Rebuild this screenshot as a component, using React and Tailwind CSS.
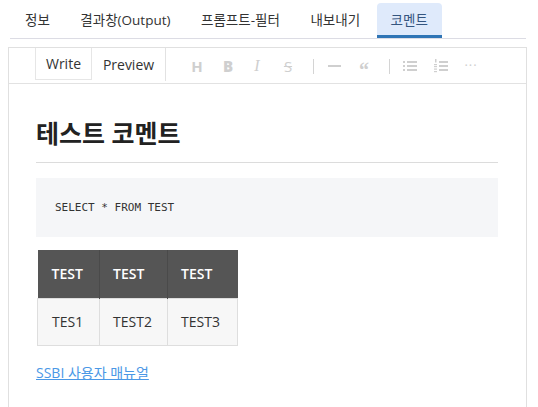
import React from 'react';

const tabs = ['정보', '결과창(Output)', '프롬프트-필터', '내보내기', '코멘트'];

const ToolIcon = ({ children, className = '' }) => (
  <div className={`w-[20px] h-[20px] flex items-center justify-center text-[#cfcfcf] ${className}`}>
    {children}
  </div>
);

const Sep = ({ className = '' }) => <div className={`w-px h-[15px] bg-[#d4d4d4] ${className}`} />;

const Toolbar = () => (
  <div className="flex items-start h-[36px] border-b border-[#e2e2e2] pl-[26px]">
    <div className="h-[32px] w-[57px] flex items-center justify-center bg-white border-x border-b border-[#e6e6e6] text-[14px] text-[#333]">
      Write
    </div>
    <div className="h-[33px] w-[74px] flex items-center justify-center border-r border-[#e2e2e2] text-[14px] text-[#333]">
      Preview
    </div>
    <div className="flex items-center h-[36px]">
      <ToolIcon className="ml-[21px]"><span className="font-bold text-[15px]">H</span></ToolIcon>
      <ToolIcon className="ml-[11px]"><span className="font-black text-[15px]">B</span></ToolIcon>
      <ToolIcon className="ml-[9px]"><span className="italic text-[16px] font-['Liberation_Serif',serif]">I</span></ToolIcon>
      <ToolIcon className="ml-[11px]"><span className="line-through text-[15px]">S</span></ToolIcon>
      <Sep className="ml-[15px]" />
      <ToolIcon className="ml-[10px]">
        <div className="w-[13px] h-[2px] bg-[#cfcfcf]" />
      </ToolIcon>
      <ToolIcon className="ml-[10px]">
        <span className="font-black text-[20px] leading-none mt-[8px] font-['Liberation_Serif',serif]">“</span>
      </ToolIcon>
      <Sep className="ml-[15px]" />
      <ToolIcon className="ml-[10px]">
        <svg width="14" height="12" viewBox="0 0 14 12" fill="#cfcfcf">
          <rect x="0" y="1" width="2" height="2" />
          <rect x="0" y="5" width="2" height="2" />
          <rect x="0" y="9" width="2" height="2" />
          <rect x="4" y="1" width="10" height="2" />
          <rect x="4" y="5" width="10" height="2" />
          <rect x="4" y="9" width="10" height="2" />
        </svg>
      </ToolIcon>
      <ToolIcon className="ml-[11px]">
        <svg width="14" height="14" viewBox="0 0 14 14" fill="#cfcfcf">
          <rect x="1" y="0" width="1.5" height="3.5" />
          <rect x="0" y="5" width="3" height="1.2" />
          <rect x="0" y="7" width="3" height="1.2" />
          <rect x="0" y="9.5" width="3" height="1.2" />
          <rect x="0" y="12" width="3" height="1.2" />
          <rect x="5" y="2" width="9" height="2" />
          <rect x="5" y="6" width="9" height="2" />
          <rect x="5" y="10" width="9" height="2" />
        </svg>
      </ToolIcon>
      <ToolIcon className="ml-[10px]"><span className="text-[13px] tracking-[1px]">···</span></ToolIcon>
    </div>
  </div>
);

export default function App() {
  return (
    <div className="w-[538px] h-[407px] overflow-hidden bg-white font-['Open_Sans','Noto_Sans_CJK_KR',sans-serif] text-[#333]">
      <div className="ml-[10px] mr-[12px] pt-[3px] pl-[1px] flex gap-[2.5px] border-b border-[#dcdce4]">
        {tabs.map((t, i) => {
          const active = i === tabs.length - 1;
          return (
            <div
              key={t}
              className={`h-[35px] px-[14px] flex items-center text-[13.5px] ${
                active
                  ? 'bg-[#dfeafb] rounded-t-[4px] border-b-[3px] border-[#2f75b5] pt-[3px] text-[#34557f]'
                  : 'text-[#333]'
              }`}
            >
              {t}
            </div>
          );
        })}
      </div>

      <div className="mt-[8px] ml-[8px] w-[519px] h-[400px] border border-[#e0e0e0]">
        <Toolbar />
        <div className="pl-[27px] pr-[28px] pt-[33px]">
          <h1 className="text-[25px] leading-[32px] font-bold text-[#222] pb-[13px] border-b border-[#dcdcdc]">
            테스트 코멘트
          </h1>
          <div className="mt-[15px] bg-[#f5f6f8] py-[20px] px-[19px] font-['DejaVu_Sans_Mono',monospace] text-[11px] leading-[19px] text-[#333]">
            SELECT * FROM TEST
          </div>
          <table className="mt-[13px] ml-[1px] border-collapse text-[14px]">
            <thead>
              <tr className="bg-[#555] text-white">
                <th className="w-[62px] h-[48px] pl-[14px] text-left font-semibold border-r border-[#4a4a4a]">TEST</th>
                <th className="w-[68px] h-[48px] pl-[13px] text-left font-semibold border-r border-[#4a4a4a]">TEST</th>
                <th className="w-[70px] h-[48px] pl-[13px] text-left font-semibold">TEST</th>
              </tr>
            </thead>
            <tbody>
              <tr className="bg-[#f7f7f7] text-[#333]">
                <td className="h-[47px] pl-[14px] border border-[#dedede]">TES1</td>
                <td className="h-[47px] pl-[13px] border border-[#dedede]">TEST2</td>
                <td className="h-[47px] pl-[13px] border border-[#dedede]">TEST3</td>
              </tr>
            </tbody>
          </table>
          <div className="mt-[16px] leading-[20px]">
            <a href="#" className="text-[14px] text-[#4a98e6] underline">
              SSBI 사용자 매뉴얼
            </a>
          </div>
        </div>
      </div>
    </div>
  );
}
